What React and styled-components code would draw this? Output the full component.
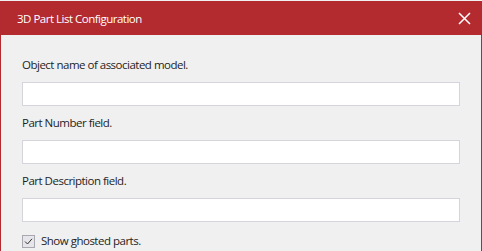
import React from 'react';
import styled, { createGlobalStyle } from 'styled-components';

const Global = createGlobalStyle`
  html, body {
    margin: 0;
    padding: 0;
    background: #f0f0f0;
    overflow: hidden;
  }
  * { box-sizing: border-box; }
`;

const Dialog = styled.div`
  margin-top: 1px;
  width: 482px;
  height: 260px;
  border-left: 1px solid #b32a30;
  border-right: 1px solid #b32a30;
  background: #f0f0f0;
  font-family: "Open Sans", "Noto Sans", sans-serif;
  color: #1e1e1e;
`;

const TitleBar = styled.div`
  height: 34px;
  background: #b32a2f;
  color: #fff;
  display: flex;
  align-items: center;
  justify-content: space-between;
  padding: 0 10px 0 16px;
`;

const Title = styled.div`
  font-size: 11.5px;
  letter-spacing: -0.5px;
`;

const Close = styled.button`
  border: none;
  background: none;
  padding: 0;
  width: 14px;
  height: 14px;
  display: flex;
  align-items: center;
  justify-content: center;
  cursor: pointer;
`;

const Body = styled.div`
  padding: 22px 21px 0 21px;
  display: flex;
  flex-direction: column;
`;

const Field = styled.div`
  display: flex;
  flex-direction: column;
  margin-bottom: 9px;
`;

const Label = styled.label`
  font-size: 11.5px;
  letter-spacing: -0.5px;
  line-height: 16px;
  margin-bottom: 9px;
`;

const Input = styled.input`
  width: 438px;
  height: 24px;
  border: 1px solid #d4d4dc;
  background: #fff;
  outline: none;
  font: inherit;
  font-size: 12px;
  padding: 0 4px;
`;

const CheckRow = styled.label`
  display: flex;
  align-items: center;
  gap: 6px;
  font-size: 11.5px;
  letter-spacing: -0.5px;
  line-height: 16px;
  margin-top: 2px;
`;

const Box = styled.span`
  width: 13px;
  height: 13px;
  border: 1px solid #a8a8b0;
  background: #e6e6ea;
  display: flex;
  align-items: center;
  justify-content: center;
`;

const fields = [
  'Object name of associated model.',
  'Part Number field.',
  'Part Description field.',
];

export default function App() {
  return (
    <>
      <Global />
      <Dialog>
        <TitleBar>
          <Title>3D Part List Configuration</Title>
          <Close aria-label="Close">
            <svg width="13" height="13" viewBox="0 0 13 13">
              <path d="M1 1L12 12M12 1L1 12" stroke="#fff" strokeWidth="1.5" />
            </svg>
          </Close>
        </TitleBar>
        <Body>
          {fields.map((f) => (
            <Field key={f}>
              <Label>{f}</Label>
              <Input type="text" />
            </Field>
          ))}
          <CheckRow>
            <Box>
              <svg width="9" height="9" viewBox="0 0 9 9">
                <path d="M1 4.5L3.5 7L8 1.8" stroke="#333" strokeWidth="1" fill="none" />
              </svg>
            </Box>
            Show ghosted parts.
          </CheckRow>
        </Body>
      </Dialog>
    </>
  );
}
